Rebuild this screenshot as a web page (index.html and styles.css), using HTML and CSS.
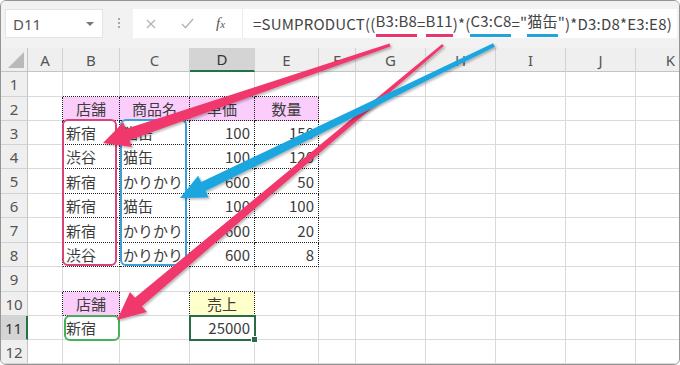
FILE: index.html
```html
<!DOCTYPE html>
<html lang="ja">

<head>
    <meta charset="UTF-8">
    <meta name="viewport" content="width=device-width, initial-scale=1.0">
    <title>SUMPRODUCT 店舗別の売上</title>
    <link rel="stylesheet" href="styles.css">
</head>

<body>

    <div class="window">
        <div class="toolbar">
            <div class="name-box">D11<span class="name-arrow"></span></div>
            <div class="grip"></div>
            <div class="fx-buttons">
                <svg class="icon-x" width="10" height="10" viewBox="0 0 10 10">
                    <path d="M1 1 L9 9 M9 1 L1 9" />
                </svg>
                <svg class="icon-ok" width="13" height="11" viewBox="0 0 13 11">
                    <path d="M1 6 L4.5 9.8 L12 1" />
                </svg>
                <span class="fx">f<span class="fx-x">x</span></span>
            </div>
            <div class="formula">=SUMPRODUCT((<span class="ul pink">B3:B8</span>=<span class="ul pink">B11</span>)*(<span class="ul blue">C3:C8</span>="<span class="ul blue">猫缶</span>")*D3:D8*E3:E8)</div>
        </div>

        <div class="sheet" id="sheet"></div>

        <svg class="marks" width="680" height="365" viewBox="0 0 680 365">
            <defs>
                <filter id="shadow" x="-10%" y="-10%" width="130%" height="130%">
                    <feDropShadow dx="1.5" dy="1.5" stdDeviation="1.2" flood-color="#000" flood-opacity="0.3" />
                </filter>
            </defs>
            <rect class="ring ring-pink" x="63" y="120" width="53" height="145" rx="5" />
            <rect class="ring ring-blue" x="121" y="120" width="65" height="145" rx="5" />
            <rect class="ring ring-green" x="65" y="316" width="54" height="24" rx="5" />
            <polygon id="arrowStore" class="arrow arrow-pink" />
            <polygon id="arrowCheck" class="arrow arrow-pink" />
            <polygon id="arrowItem" class="arrow arrow-blue" />
        </svg>
    </div>

    <script>
        const cols = ["", "A", "B", "C", "D", "E", "F", "G", "H", "I", "J", "K"];

        const data = {
            B2: "店舗", C2: "商品名", D2: "単価", E2: "数量",
            B3: "新宿", C3: "猫缶", D3: 100, E3: 150,
            B4: "渋谷", C4: "猫缶", D4: 100, E4: 120,
            B5: "新宿", C5: "かりかり", D5: 600, E5: 50,
            B6: "新宿", C6: "猫缶", D6: 100, E6: 100,
            B7: "新宿", C7: "かりかり", D7: 600, E7: 20,
            B8: "渋谷", C8: "かりかり", D8: 600, E8: 8,
            B10: "店舗", D10: "売上",
            B11: "新宿", D11: 25000
        };

        const fills = { B2: "pink", C2: "pink", D2: "pink", E2: "pink", B10: "pink", D10: "yellow" };

        // dotted boxes: [firstCol, firstRow, lastCol, lastRow]
        const boxes = [[2, 2, 5, 8], [2, 10, 2, 10], [4, 10, 4, 10]];

        function inBox(c, r) {
            return boxes.some(b => c >= b[0] && c <= b[2] && r >= b[1] && r <= b[3]);
        }

        function renderSheet() {
            const sheet = document.getElementById("sheet");

            for (let r = 0; r <= 12; r++) {
                for (let c = 0; c < cols.length; c++) {
                    const cell = document.createElement("div");
                    cell.classList.add("cell");

                    if (r === 0 && c === 0) {
                        cell.classList.add("head", "corner");
                    } else if (r === 0) {
                        cell.classList.add("head", "col-head");
                        if (c === 4) cell.classList.add("active");
                        cell.textContent = cols[c];
                    } else if (c === 0) {
                        cell.classList.add("head", "row-head");
                        if (r === 11) cell.classList.add("active");
                        cell.textContent = r;
                    } else {
                        const key = cols[c] + r;
                        const value = data[key];
                        if (typeof value === "number") cell.classList.add("num");
                        if (fills[key]) cell.classList.add("fill-" + fills[key]);
                        if (inBox(c, r) || inBox(c + 1, r)) cell.classList.add("dot-r");
                        if (inBox(c, r) || inBox(c, r + 1)) cell.classList.add("dot-b");
                        if (key === "D11") cell.classList.add("selected");
                        if (value !== undefined) cell.textContent = value;
                    }

                    sheet.appendChild(cell);
                }
            }
        }

        // tapered arrow from s to tip t
        function arrowPoints(s, t, w0, w1, len, head) {
            const dx = t[0] - s[0];
            const dy = t[1] - s[1];
            const d = Math.hypot(dx, dy);
            const ux = dx / d, uy = dy / d;
            const px = -uy, py = ux;
            const bx = t[0] - ux * len, by = t[1] - uy * len;
            const pts = [
                [s[0] + px * w0, s[1] + py * w0],
                [bx + px * w1, by + py * w1],
                [bx + px * head, by + py * head],
                t,
                [bx - px * head, by - py * head],
                [bx - px * w1, by - py * w1],
                [s[0] - px * w0, s[1] - py * w0]
            ];
            return pts.map(p => p[0].toFixed(1) + "," + p[1].toFixed(1)).join(" ");
        }

        renderSheet();
        document.getElementById("arrowStore").setAttribute("points", arrowPoints([390, 45], [103, 143], 1.5, 6, 26, 13));
        document.getElementById("arrowCheck").setAttribute("points", arrowPoints([443, 45], [117, 320], 1.2, 5.5, 28, 13));
        document.getElementById("arrowItem").setAttribute("points", arrowPoints([494, 45], [180, 198], 2, 5, 26, 12));
    </script>
</body>

</html>
```

FILE: styles.css
```css
body {
    margin: 0;
    background: #fff;
    font-family: "Noto Sans CJK JP", "Noto Sans", sans-serif;
    color: #3c3c3c;
}

.window {
    position: relative;
    width: 680px;
    height: 365px;
    box-sizing: border-box;
    border: 1px solid #959595;
    border-radius: 6px;
    overflow: hidden;
    background: #fff;
}

/* formula bar */

.toolbar {
    height: 47px;
    display: flex;
    align-items: flex-start;
    padding: 8px 2px 0 4px;
    box-sizing: border-box;
    background: #f2f2f2;
}

.name-box {
    width: 98px;
    height: 29px;
    box-sizing: border-box;
    display: flex;
    align-items: center;
    justify-content: space-between;
    padding: 0 8px 0 7px;
    background: #fff;
    border: 1px solid #e4e4e4;
    font-family: "Noto Sans", sans-serif;
    font-size: 15px;
    color: #555;
}

.name-arrow {
    width: 0;
    height: 0;
    border-left: 4px solid transparent;
    border-right: 4px solid transparent;
    border-top: 4px solid #777;
}

.grip {
    width: 2px;
    height: 11px;
    margin: 9px 0 0 15px;
    background: repeating-linear-gradient(#a8a8a8 0 2px, transparent 2px 4px);
}

.fx-buttons {
    width: 110px;
    height: 29px;
    margin-left: 13px;
    box-sizing: border-box;
    display: flex;
    align-items: center;
    padding-left: 13px;
    background: #fff;
    border-right: 1px solid #ececec;
}

.icon-x path,
.icon-ok path {
    fill: none;
    stroke: #b4b4b4;
    stroke-width: 1.4;
}

.icon-ok {
    margin-left: 25px;
}

.fx {
    margin-left: 22px;
    font-family: "Liberation Serif", serif;
    font-style: italic;
    font-size: 15px;
    color: #555;
}

.fx-x {
    font-size: 11px;
}

.formula {
    flex: 1;
    height: 29px;
    box-sizing: border-box;
    display: flex;
    align-items: center;
    padding-left: 10px;
    background: #fff;
    font-size: 15px;
    letter-spacing: 0.2px;
    color: #444;
    white-space: nowrap;
}

.ul {
    border-bottom: 3px solid;
    padding-bottom: 3px;
}

.ul.pink {
    border-color: #e6366b;
}

.ul.blue {
    border-color: #21a3dc;
}

/* sheet */

.sheet {
    display: grid;
    grid-template-columns: 27px 35px 57px 70px 65px 64px 37px 70px 70px 70px 70px 70px;
    grid-template-rows: 24px 25px 24px 24px 24px 25px 24px 25px 24px 25px 24px 24px 24px;
}

.cell {
    box-sizing: border-box;
    display: flex;
    align-items: center;
    padding: 0 3px;
    border-right: 1px solid #dadada;
    border-bottom: 1px solid #dadada;
    font-size: 15px;
    white-space: nowrap;
    overflow: hidden;
}

.num {
    justify-content: flex-end;
    padding-right: 4px;
}

.fill-pink,
.fill-yellow {
    justify-content: center;
}

.fill-pink {
    background: #fbcdfb;
}

.fill-yellow {
    background: #ffffcc;
}

.dot-r {
    border-right: 1px dotted #222;
}

.dot-b {
    border-bottom: 1px dotted #222;
}

.selected {
    position: relative;
    overflow: visible;
    outline: 2px solid #2d6b48;
    outline-offset: -1px;
    z-index: 1;
}

.selected::after {
    content: "";
    position: absolute;
    right: -4px;
    bottom: -4px;
    width: 5px;
    height: 5px;
    background: #2d6b48;
    border: 1px solid #fff;
}

.head {
    justify-content: center;
    background: #efefef;
    border-color: #d2d2d2;
    font-family: "Noto Sans", sans-serif;
    color: #555;
}

.col-head {
    border-bottom-color: #c4c4c4;
}

.row-head {
    border-right-color: #c4c4c4;
}

.col-head.active {
    background: #d4d4d4;
    border-bottom: 2px solid #217346;
    color: #333;
}

.row-head.active {
    background: #d4d4d4;
    border-right: 2px solid #217346;
    color: #333;
}

.corner {
    position: relative;
    border-color: #c4c4c4;
}

.corner::after {
    content: "";
    position: absolute;
    right: 3px;
    bottom: 3px;
    border-left: 16px solid transparent;
    border-bottom: 16px solid #b9b9b9;
}

/* annotations */

.marks {
    position: absolute;
    left: -1px;
    top: -1px;
    pointer-events: none;
}

.ring {
    fill: none;
    stroke-width: 2;
}

.ring-pink {
    stroke: #d9437a;
}

.ring-blue {
    stroke: #3d9fd9;
}

.ring-green {
    stroke: #46b05c;
}

.arrow {
    filter: url(#shadow);
}

.arrow-pink {
    fill: #f0376c;
}

.arrow-blue {
    fill: #1ea6e0;
}
```
